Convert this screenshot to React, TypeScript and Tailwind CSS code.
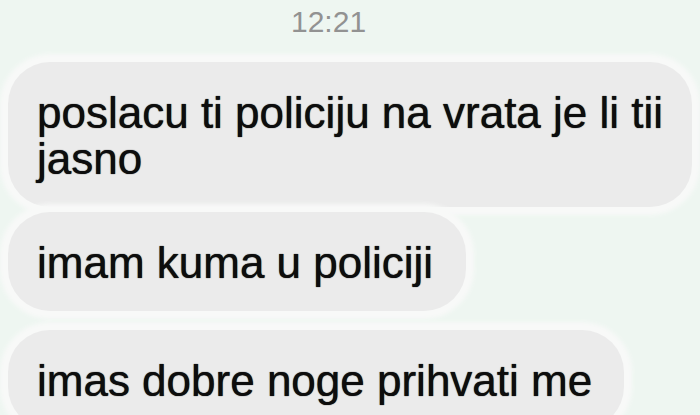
const messages = [
  { lines: ["poslacu ti policiju na vrata je li tii", "jasno"], cls: "mt-[15px] w-[684px] pr-[24px]" },
  { lines: ["imam kuma u policiji"], cls: "mt-[5px] pr-[33px]" },
  { lines: ["imas dobre noge prihvati me"], cls: "mt-[19px] pr-[32px]" },
];

export default function App() {
  return (
    <div className="w-[700px] h-[415px] overflow-hidden bg-[#eef6f1] font-['Liberation_Sans',Arial,sans-serif]">
      <div className="h-[47px] pt-[7px] pl-[291px] text-[30px] leading-none text-[#929292]">12:21</div>
      <div className="flex flex-col items-start">
        {messages.map((m, i) => (
          <div
            key={i}
            className={
              "ml-[8px] pl-[29px] pt-[28px] pb-[25px] rounded-[42px] bg-[#ebebeb] text-[44px] leading-[46px] text-[#0d0d0d] whitespace-nowrap [text-shadow:0_0_1px_#000] shadow-[0_0_4px_8px_#f8f9f8] " +
              m.cls
            }
          >
            {m.lines.map((l, j) => (
              <div key={j}>{l}</div>
            ))}
          </div>
        ))}
      </div>
    </div>
  );
}
